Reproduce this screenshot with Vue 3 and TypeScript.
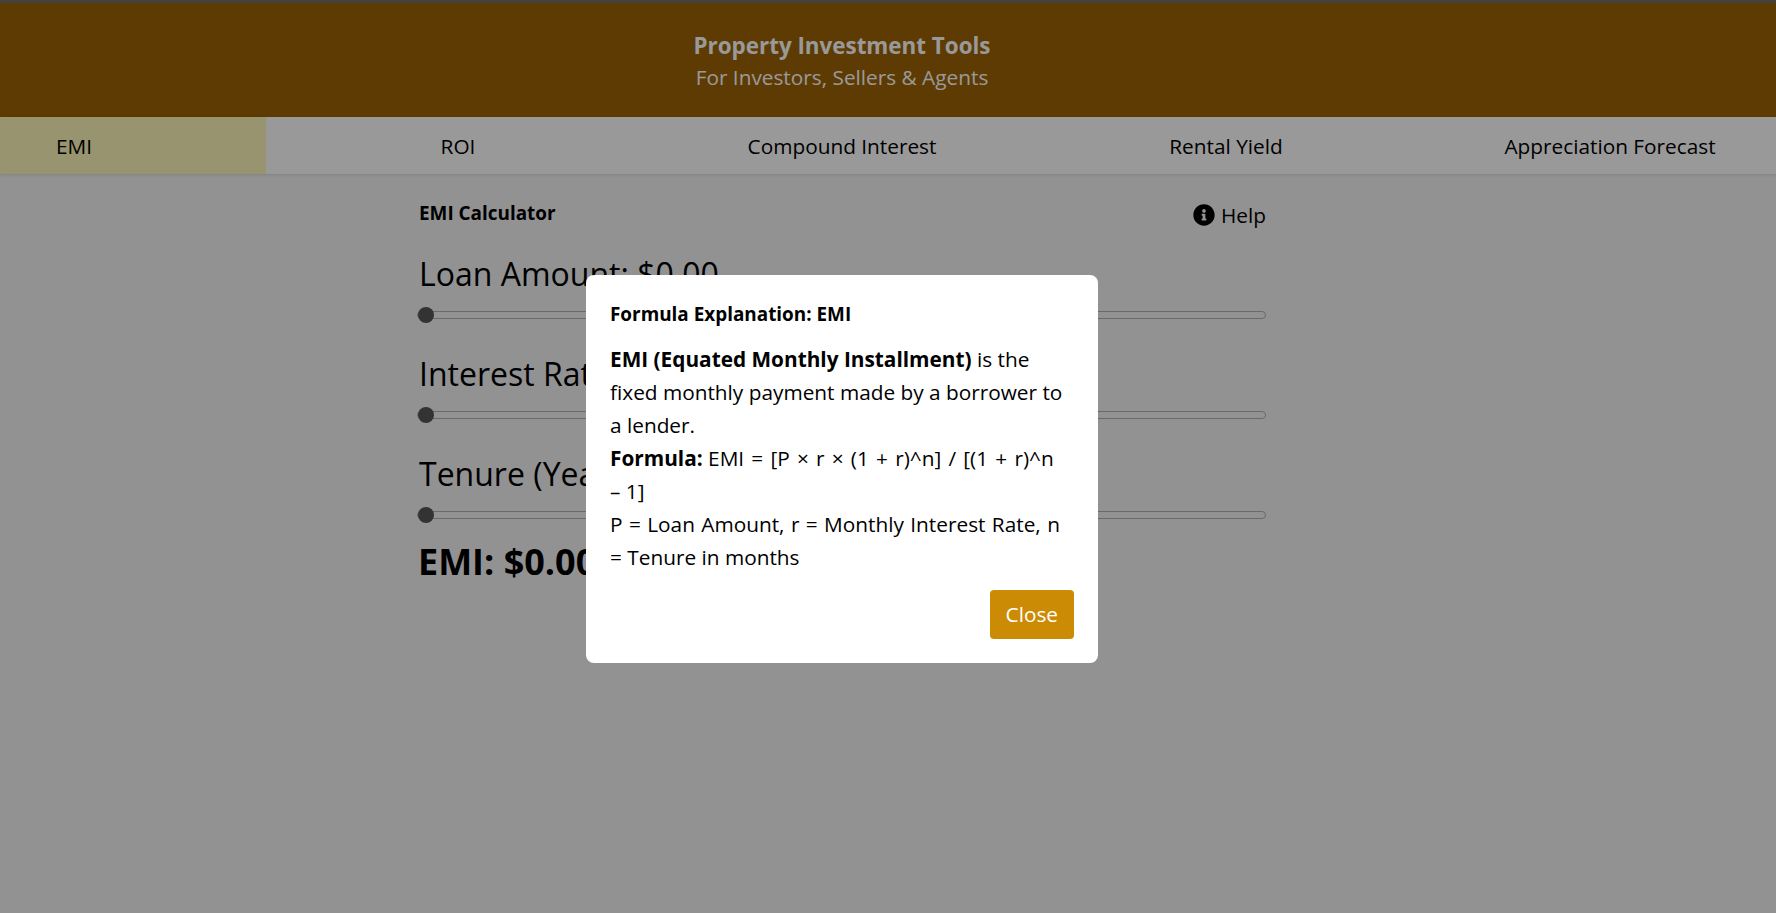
<script setup lang="ts">
import { ref } from 'vue'

const tabs = ['EMI', 'ROI', 'Compound Interest', 'Rental Yield', 'Appreciation Forecast']
const active = ref('EMI')
const showHelp = ref(true)

const loan = ref(0)
const rate = ref(0)
const years = ref(0)
</script>

<template>
  <div class="app">
    <div class="topline"></div>
    <header class="hero">
      <h1>Property Investment Tools</h1>
      <p>For Investors, Sellers &amp; Agents</p>
    </header>

    <nav class="tabs">
      <button
        v-for="tab in tabs"
        :key="tab"
        class="tab"
        :class="{ 'tab--active': tab === active }"
        @click="active = tab"
      >
        {{ tab }}
      </button>
    </nav>

    <main class="calc">
      <div class="calc__head">
        <h2>EMI Calculator</h2>
        <button class="help" @click="showHelp = true">
          <svg viewBox="0 0 512 512" width="22" height="22" aria-hidden="true">
            <path
              d="M256 8C119.043 8 8 119.083 8 256c0 136.997 111.043 248 248 248s248-111.003 248-248C504 119.083 392.957 8 256 8zm0 110c23.196 0 42 18.804 42 42s-18.804 42-42 42-42-18.804-42-42 18.804-42 42-42zm56 254c0 6.627-5.373 12-12 12h-88c-6.627 0-12-5.373-12-12v-24c0-6.627 5.373-12 12-12h12v-64h-12c-6.627 0-12-5.373-12-12v-24c0-6.627 5.373-12 12-12h64c6.627 0 12 5.373 12 12v100h12c6.627 0 12 5.373 12 12v24z"
            />
          </svg>
          Help
        </button>
      </div>

      <div class="fields">
        <label class="field">
          <span>Loan Amount: ${{ loan.toFixed(2) }}</span>
          <input v-model.number="loan" type="range" min="0" max="1000000" />
        </label>
        <label class="field">
          <span>Interest Rate: {{ rate }}%</span>
          <input v-model.number="rate" type="range" min="0" max="20" />
        </label>
        <label class="field">
          <span>Tenure (Years): {{ years }}</span>
          <input v-model.number="years" type="range" min="0" max="40" />
        </label>
      </div>
      <div class="result">EMI: $0.00</div>
    </main>

    <div v-if="showHelp" class="overlay">
      <div class="modal">
        <h3>Formula Explanation: EMI</h3>
        <div class="modal__body">
          <strong>EMI (Equated Monthly Installment)</strong> is the fixed monthly payment made by a
          borrower to a lender.<br />
          <strong>Formula:</strong> <span class="math">EMI = [P × r × (1 + r)^n] / [(1 + r)^n</span><br />– 1]<br />
          <span class="legend">P = Loan Amount, r = Monthly Interest Rate, n</span><br />= Tenure in months
        </div>
        <div class="modal__foot">
          <button class="close" @click="showHelp = false">Close</button>
        </div>
      </div>
    </div>
  </div>
</template>

<style>
body {
  background: #f4f4f5;
  overflow: hidden;
}
</style>

<style scoped>
.app {
  min-height: 913px;
  font-family: 'Open Sans', 'Noto Sans', sans-serif;
  color: #000;
  background: #f4f4f5;
  overflow: hidden;
}

.topline {
  height: 3px;
  background: #6f6f6f;
}

.hero {
  height: 114px;
  box-sizing: border-box;
  padding: 28px 92px 0 0;
  background: #9c6305;
  color: #fff;
  text-align: center;
}

.hero h1 {
  margin: 0;
  font-size: 22.4px;
  line-height: 30px;
  font-weight: 700;
}

.hero p {
  margin: 0;
  font-size: 20.8px;
  line-height: 33px;
}

.tabs {
  position: relative;
  display: grid;
  grid-template-columns: 266px repeat(4, 384px);
  height: 57px;
  background: #fff;
  box-shadow: 0 1px 3px rgba(0, 0, 0, 0.12);
}

.tab {
  border: 0;
  padding: 0;
  background: none;
  font: inherit;
  font-size: 20.8px;
  color: #000;
}

.tab--active {
  padding-left: 56px;
  text-align: left;
  background: #fdf7b9;
  font-weight: 500;
}

.calc {
  width: 847px;
  margin-left: 419px;
}

.calc__head {
  display: flex;
  justify-content: space-between;
  align-items: flex-start;
  padding: 26px 0 22px;
}

.calc__head h2 {
  margin: 0;
  font-size: 18.9px;
  line-height: 26px;
  font-weight: 700;
}

.help {
  display: flex;
  align-items: center;
  gap: 6px;
  height: 30px;
  border: 0;
  padding: 0;
  background: none;
  font: inherit;
  font-size: 20.8px;
  color: #000;
}

.fields {
  display: flex;
  flex-direction: column;
  gap: 33px;
}

.field {
  display: block;
}

.field span {
  display: block;
  font-size: 32px;
  line-height: 44px;
}

.field input {
  display: block;
  appearance: none;
  box-sizing: border-box;
  width: calc(100% + 2px);
  height: 8px;
  margin: 15px 0 0 -2px;
  border: 1px solid #b1b1b1;
  border-radius: 5px;
  background: #f4f4f5;
}

.field input::-webkit-slider-thumb {
  appearance: none;
  width: 16px;
  height: 16px;
  border-radius: 50%;
  background: #555;
}

.result {
  margin: 18px 0 0 -1px;
  font-size: 36px;
  line-height: 50px;
  font-weight: 700;
}

.overlay {
  position: fixed;
  inset: 0;
  display: flex;
  align-items: center;
  justify-content: center;
  padding: 24px 92px 0 0;
  background: rgba(0, 0, 0, 0.4);
}

.modal {
  width: 512px;
  box-sizing: border-box;
  padding: 24px;
  border-radius: 8px;
  background: #fff;
}

.modal h3 {
  margin: 0 0 14px;
  font-size: 18.9px;
  line-height: 30px;
  font-weight: 700;
}

.modal__body {
  font-size: 20.8px;
  line-height: 33px;
}

.math {
  word-spacing: 1.8px;
}

.legend {
  word-spacing: 1px;
}

.modal__foot {
  display: flex;
  justify-content: flex-end;
  margin-top: 16px;
}

.close {
  height: 49px;
  padding: 0 16px;
  border: 0;
  border-radius: 4px;
  background: #cc8b05;
  color: #fff;
  font: inherit;
  font-size: 20.8px;
}
</style>
